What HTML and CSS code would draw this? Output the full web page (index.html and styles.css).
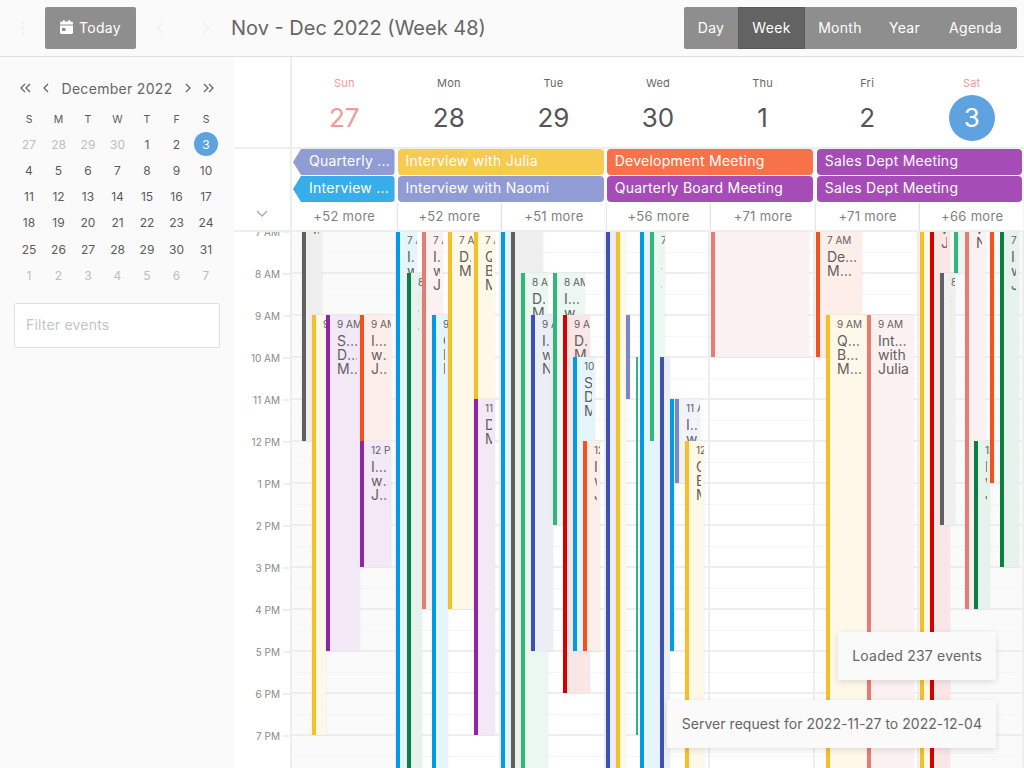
FILE: index.html
```html
<!DOCTYPE html>
<html>
<head>
    <meta charset="UTF-8">
    <meta name="viewport" content="width=device-width, initial-scale=1.0">
    <title>Calendar</title>
    <link rel="stylesheet" href="styles.css">
</head>
<body>
    <header class="topbar">
        <button class="icon-btn menu-btn" aria-label="Menu">
            <svg width="4" height="14" viewBox="0 0 4 14"><circle cx="2" cy="2" r="1.5"/><circle cx="2" cy="7" r="1.5"/><circle cx="2" cy="12" r="1.5"/></svg>
        </button>
        <button class="btn today-btn">
            <svg width="13" height="14" viewBox="0 0 13 14"><path d="M3 0h1.600v1.600h3.800V0H10v1.600h1.500c.8 0 1.500.7 1.500 1.500v1.500H0V3.100C0 2.300.7 1.600 1.500 1.600H3zM0 5.600h13v7c0 .8-.7 1.400-1.500 1.400h-10C.7 14 0 13.400 0 12.600zM2 8v3h3.500V8z" fill-rule="evenodd"/></svg>
            Today
        </button>
        <button class="icon-btn prev-btn" aria-label="Previous">
            <svg width="9" height="14" viewBox="0 0 9 14"><path d="M7.500 1 1.500 7l6 6" fill="none" stroke="currentColor" stroke-width="1.600"/></svg>
        </button>
        <button class="icon-btn next-btn" aria-label="Next">
            <svg width="9" height="14" viewBox="0 0 9 14"><path d="M1.500 1l6 6-6 6" fill="none" stroke="currentColor" stroke-width="1.600"/></svg>
        </button>
        <h1 class="range-title">Nov - Dec 2022 (Week 48)</h1>
        <div class="view-group">
            <button class="view-btn view-day">Day</button>
            <button class="view-btn view-week active">Week</button>
            <button class="view-btn view-month">Month</button>
            <button class="view-btn view-year">Year</button>
            <button class="view-btn view-agenda">Agenda</button>
        </div>
    </header>

    <div class="main">
        <aside class="sidebar">
            <div class="month-nav">
                <svg width="11" height="10" viewBox="0 0 11 10"><path d="M5 1 1 5l4 4M10 1 6 5l4 4"/></svg>
                <svg class="nav-single" width="7" height="10" viewBox="0 0 7 10"><path d="M6 1 2 5l4 4"/></svg>
                <span class="month-name">December 2022</span>
                <svg class="nav-single" width="7" height="10" viewBox="0 0 7 10"><path d="M1 1l4 4-4 4"/></svg>
                <svg width="11" height="10" viewBox="0 0 11 10"><path d="M1 1l4 4-4 4M6 1l4 4-4 4"/></svg>
            </div>
            <div class="mini-cal" id="mini-cal"></div>
            <input class="filter-input" type="text" placeholder="Filter events">
        </aside>

        <section class="calendar">
            <div class="day-heads">
                <div class="axis-cell"></div>
                <div class="day-head weekend"><span class="day-name">Sun</span><span class="day-num">27</span></div>
                <div class="day-head"><span class="day-name">Mon</span><span class="day-num">28</span></div>
                <div class="day-head"><span class="day-name">Tue</span><span class="day-num">29</span></div>
                <div class="day-head"><span class="day-name">Wed</span><span class="day-num">30</span></div>
                <div class="day-head"><span class="day-name">Thu</span><span class="day-num">1</span></div>
                <div class="day-head"><span class="day-name">Fri</span><span class="day-num">2</span></div>
                <div class="day-head weekend"><span class="day-name">Sat</span><span class="day-num today">3</span></div>
            </div>

            <div class="allday">
                <div class="axis-cell allday-axis">
                    <svg width="12" height="7" viewBox="0 0 12 7"><path d="M1 1l5 5 5-5" fill="none" stroke="#aaa" stroke-width="1.300"/></svg>
                </div>
                <div class="allday-bars">
                    <div class="bar bar-peri bar-cont">Quarterly ...</div>
                    <div class="bar bar-yellow span-2">Interview with Julia</div>
                    <div class="bar bar-orange span-2">Development Meeting</div>
                    <div class="bar bar-purple span-2 bar-last">Sales Dept Meeting</div>
                    <div class="bar bar-blue bar-cont">Interview ...</div>
                    <div class="bar bar-peri span-2">Interview with Naomi</div>
                    <div class="bar bar-purple span-2">Quarterly Board Meeting</div>
                    <div class="bar bar-purple span-2 bar-last">Sales Dept Meeting</div>
                </div>
                <div class="more-row">
                    <span>+52 more</span><span>+52 more</span><span>+51 more</span><span>+56 more</span><span>+71 more</span><span>+71 more</span><span>+66 more</span>
                </div>
            </div>

            <div class="grid-wrap">
                <div class="time-axis" id="time-axis"></div>
                <div class="canvas" id="canvas">
                    <div class="day-col weekend"></div>
                    <div class="day-col"></div>
                    <div class="day-col"></div>
                    <div class="day-col"></div>
                    <div class="day-col"></div>
                    <div class="day-col"></div>
                    <div class="day-col weekend"></div>
                </div>
            </div>
        </section>
    </div>

    <div class="toasts">
        <div class="toast toast-loaded">Loaded 237 events</div>
        <div class="toast toast-server">Server request for 2022-11-27 to 2022-12-04</div>
    </div>

    <script src="script.js"></script>
</body>
</html>
```

FILE: styles.css
```css
* {
    box-sizing: border-box;
}
html, body {
    height: 100%;
}
body {
    display: flex;
    flex-direction: column;
    margin: 0;
    overflow: hidden;
    background-color: #fff;
    color: #616161;
    font-family: Inter, "Noto Sans", sans-serif;
}
button {
    font-family: inherit;
    border: none;
    background: none;
    padding: 0;
}

/* top toolbar */
.topbar {
    display: flex;
    align-items: center;
    flex: none;
    height: 57px;
    padding: 0 7px 1px 0;
    background-color: #fafafa;
    border-bottom: 1px solid #e0e0e0;
}
.icon-btn {
    display: flex;
    align-items: center;
    justify-content: center;
    color: #f2f2f2;
    fill: #f0f0f0;
}
.menu-btn {
    width: 45px;
}
.prev-btn {
    width: 45px;
    margin-left: 2px;
}
.next-btn {
    width: 45px;
}
.btn {
    display: flex;
    align-items: center;
    justify-content: center;
    gap: 6px;
    width: 91px;
    height: 42px;
    background-color: #8e8e8e;
    color: #fff;
    font-size: 14px;
    letter-spacing: 0.3px;
    border-radius: 2px;
}
.today-btn svg {
    fill: #fff;
    margin-bottom: 1px;
}
.range-title {
    flex: 1;
    margin: 0 0 0 3px;
    color: #666;
    font-size: 20px;
    font-weight: 400;
}
.view-group {
    display: flex;
    height: 42px;
    border-radius: 2px;
    overflow: hidden;
    background-color: #8e8e8e;
}
.view-btn {
    color: #fff;
    font-size: 14px;
    letter-spacing: 0.3px;
}
.view-day {
    width: 54px;
}
.view-week {
    width: 67px;
}
.view-month {
    width: 70px;
}
.view-year {
    width: 59px;
}
.view-agenda {
    width: 83px;
}
.view-btn.active {
    background-color: #636363;
    box-shadow: inset 0 0 0 1px #5a5a5a;
}

/* main area */
.main {
    display: flex;
    flex: 1;
    min-height: 0;
}
.sidebar {
    flex: none;
    width: 234px;
    padding: 21px 14px 0;
    background-color: #fafafa;
}
.month-nav {
    display: flex;
    align-items: center;
    justify-content: space-between;
    padding: 0 6px;
    height: 20px;
    color: #666;
    font-size: 14px;
}
.month-nav svg {
    fill: none;
    stroke: #666;
    stroke-width: 1.300;
}
.month-name {
    margin: 0 1px;
    letter-spacing: 0.3px;
}
.mini-cal {
    display: grid;
    grid-template-columns: repeat(7, 29.500px);
    grid-auto-rows: 26.200px;
    justify-content: center;
    margin-top: 7px;
    margin-left: 1px;
    font-size: 12px;
}
.mini-cal span {
    display: flex;
    align-items: center;
    justify-content: center;
    color: #5a5a5a;
}
.mini-cal .mini-head {
    padding-top: 2px;
    font-size: 10.500px;
}
.mini-cal .other {
    color: #bdbdbd;
}
.mini-cal .selected::before {
    content: "";
    position: absolute;
    width: 24px;
    height: 24px;
    border-radius: 50%;
    background-color: #5ea3e0;
}
.mini-cal .selected {
    position: relative;
    color: #fff;
}
.mini-cal .selected b {
    position: relative;
    font-weight: 400;
}
.filter-input {
    display: block;
    width: 206px;
    height: 45px;
    margin-top: 15px;
    padding: 0 11px 2px;
    border: 1px solid #e0e0e0;
    border-radius: 2px;
    background-color: #fff;
    font-family: inherit;
    font-size: 14px;
    letter-spacing: 0.2px;
}
.filter-input::placeholder {
    color: #c4c4c4;
}

/* calendar */
.calendar {
    display: flex;
    flex: 1;
    flex-direction: column;
    min-width: 0;
}
.day-heads {
    display: grid;
    grid-template-columns: 58px repeat(7, 1fr);
    flex: none;
    height: 92px;
    border-bottom: 2px solid #eee;
}
.axis-cell {
    border-right: 2px solid #eee;
}
.day-head {
    display: flex;
    flex-direction: column;
    align-items: center;
    padding-top: 19px;
}
.day-name {
    height: 14px;
    color: #666;
    font-size: 11px;
    letter-spacing: 0.2px;
    line-height: 14px;
}
.weekend .day-name {
    color: #ef9a9a;
}
.day-num {
    display: flex;
    align-items: center;
    justify-content: center;
    width: 46px;
    height: 46px;
    margin-top: 5px;
    padding-bottom: 1px;
    border-radius: 50%;
    color: #555;
    font-size: 26px;
}
.weekend .day-num {
    color: #ef9a9a;
}
.weekend .day-num.today {
    background-color: #5ea3e0;
    color: #fff;
}

/* all day rows */
.allday {
    position: relative;
    flex: none;
    height: 83px;
    padding-left: 58px;
    border-bottom: 2px solid #eee;
}
.allday::after {
    content: "";
    position: absolute;
    top: 0;
    bottom: 0;
    left: 58px;
    right: 0;
    pointer-events: none;
    background-image: linear-gradient(to right, #0000000a 1px, transparent 1px);
    background-size: calc(100% / 7) 100%;
    background-position: -1px 0;
}
.allday-axis {
    position: absolute;
    top: 0;
    bottom: 0;
    left: 0;
    width: 58px;
    display: flex;
    align-items: flex-end;
    justify-content: center;
    padding: 0 0 13px 0;
}
.allday-bars {
    display: grid;
    grid-template-columns: repeat(7, 1fr);
    grid-template-rows: 26px 26px;
    gap: 1px 0;
}
.bar {
    margin: 0 2px 0 1px;
    padding: 0 8px;
    border-radius: 4px;
    color: #fff;
    font-size: 14px;
    letter-spacing: 0.25px;
    line-height: 24px;
    white-space: nowrap;
    overflow: hidden;
}
.span-2 {
    grid-column: span 2;
}
.bar-last {
    margin-left: 2px;
}
.bar-cont {
    padding-left: 16px;
    clip-path: polygon(0 50%, 8px 0, 100% 0, 100% 100%, 8px 100%);
}
.bar-peri {
    background-color: #919cd5;
}
.bar-blue {
    background-color: #37aeea;
}
.bar-yellow {
    background-color: #f7ca50;
}
.bar-orange {
    background-color: #f77248;
}
.bar-purple {
    background-color: #a64cb7;
}
.more-row {
    display: grid;
    grid-template-columns: repeat(7, 1fr);
    height: 28px;
    margin-top: 1px;
    text-align: center;
    color: #808080;
    font-size: 13px;
    letter-spacing: 0.3px;
    line-height: 26px;
}
.more-row span {
    border-left: 1px solid #e6e6e6;
}
.more-row span:first-child {
    border-left: none;
}

/* time grid */
.grid-wrap {
    display: flex;
    flex: 1;
    min-height: 0;
    overflow: hidden;
}
.time-axis {
    flex: none;
    width: 58px;
    border-right: 2px solid #eee;
}
.axis-hour {
    position: relative;
    height: 42px;
    top: -1px;
    color: #8a8a8a;
    font-size: 10px;
    line-height: 14px;
    text-align: right;
    padding-right: 10px;
}
.axis-hour span {
    position: relative;
    top: -6px;
}
.axis-hour::after {
    content: "";
    position: absolute;
    top: 0;
    right: 0;
    width: 7px;
    height: 2px;
    background-color: #eee;
}
.canvas {
    position: relative;
    display: flex;
    flex: 1;
    overflow: hidden;
}
.day-col {
    flex: 1;
    border-right: 2px solid #eee;
    background-image:
        linear-gradient(to bottom, #eee 2px, transparent 2px),
        linear-gradient(to bottom, #f5f5f5 1px, transparent 1px);
    background-size: 100% 42px;
    background-position: 0 -2px, 0 20px;
}
.day-col:last-of-type {
    border-right: none;
}
.day-col.weekend {
    background-color: #fafafa;
}
.event {
    position: absolute;
    padding: 3px 0 0 7px;
    border-left: 4px solid;
    box-shadow: 0 0 2px rgba(0, 0, 0, 0.08);
    overflow: hidden;
    color: #616161;
}
.event-bare {
    padding: 0;
}
.event-thin {
    border-left-width: 2px;
    box-shadow: none;
}
.event-time {
    height: 12px;
    margin-bottom: 4px;
    font-size: 10px;
    line-height: 12px;
    white-space: nowrap;
    overflow: hidden;
}
.event-line {
    margin-right: 3px;
    font-size: 14px;
    line-height: 14px;
    white-space: nowrap;
    overflow: hidden;
    text-overflow: ellipsis;
}
.c-blue { border-color: #039be5; background-color: #e5f5fc; }
.c-dgreen { border-color: #0b8043; background-color: #e6f2ec; }
.c-green { border-color: #33b679; background-color: #ebf7f1; }
.c-salmon { border-color: #e67c73; background-color: #fcf1f1; }
.c-yellow { border-color: #f6bf26; background-color: #fef8e9; }
.c-purple { border-color: #8e24aa; background-color: #f3e9f6; }
.c-orange { border-color: #f4511e; background-color: #feeee9; }
.c-gray { border-color: #616161; background-color: #efefef; }
.c-indigo { border-color: #3f51b5; background-color: #ebedf7; }
.c-peri { border-color: #7986cb; background-color: #f1f3fa; }
.c-red { border-color: #d50000; background-color: #fae6e6; }

/* toasts */
.toasts {
    position: absolute;
    right: 28px;
    bottom: 20px;
    display: flex;
    flex-direction: column;
    align-items: flex-end;
    gap: 20px;
}
.toast {
    height: 48px;
    padding: 0 14px;
    border-radius: 2px;
    background-color: #fafafa;
    box-shadow: 0 2px 6px rgba(0, 0, 0, 0.12);
    color: #666;
    font-size: 14px;
    line-height: 47px;
}
.toast-loaded {
    letter-spacing: 0.2px;
}
.toast-server {
    letter-spacing: 0.03px;
    padding-left: 15px;
}
```

FILE: script.js
```js
// mini month
const miniCal = document.getElementById('mini-cal');
let miniHtml = '';
['S', 'M', 'T', 'W', 'T', 'F', 'S'].forEach(d => {
    miniHtml += `<span class="mini-head">${d}</span>`;
});
[27, 28, 29, 30].forEach(d => {
    miniHtml += `<span class="other">${d}</span>`;
});
for (let d = 1; d <= 31; d++) {
    miniHtml += d === 3 ? `<span class="selected"><b>${d}</b></span>` : `<span>${d}</span>`;
}
for (let d = 1; d <= 7; d++) {
    miniHtml += `<span class="other">${d}</span>`;
}
miniCal.innerHTML = miniHtml;

// hour labels
const hours = ['7 AM', '8 AM', '9 AM', '10 AM', '11 AM', '12 PM', '1 PM', '2 PM', '3 PM', '4 PM', '5 PM', '6 PM', '7 PM', '8 PM'];
document.getElementById('time-axis').innerHTML = hours
    .map(h => `<div class="axis-hour"><span>${h}</span></div>`)
    .join('');

// events: [x, right, start hour, end hour, colour, time label, lines]
const IW = ['Interview', 'with', 'Julia'];
const IN = ['Interview', 'with', 'Naomi'];
const SD = ['Sales', 'Dept', 'Meeting'];
const DM = ['Development', 'Meeting'];
const QB = ['Quarterly', 'Board', 'Meeting'];
const events = [
    // Sun
    [302, 322, 6, 12, 'gray', '6 AM', DM],
    [312, 326, 9, 19, 'yellow', '9 AM', QB],
    [326, 360, 9, 17, 'purple', '9 AM', SD],
    [360, 391, 9, 12, 'orange', '9 AM', IW],
    [360, 391, 12, 15, 'purple', '12 PM', IW],
    // Mon
    [396, 417, 7, 24, 'blue', '7 AM', IN],
    [407, 422, 8, 24, 'dgreen', '8 AM', IW],
    [422, 443, 7, 16, 'salmon', '7 AM', IW],
    [432, 448, 9, 24, 'blue', '9 AM', QB],
    [448, 474, 7, 16, 'yellow', '7 AM', DM],
    [474, 495, 7, 11, 'yellow', '7 AM', QB],
    [474, 495, 11, 19, 'purple', '11 AM', DM],
    // Tue
    [501, 511, 5, 24, 'blue', '', []],
    [511, 543, 5, 24, 'gray', '', []],
    [521, 548, 8, 24, 'green', '8 AM', DM],
    [531, 553, 9, 17, 'indigo', '9 AM', IN],
    [553, 585, 8, 14, 'green', '8 AM', IW],
    [563, 590, 9, 18, 'red', '9 AM', DM],
    [573, 595, 10, 17, 'blue', '10 AM', SD],
    [583, 600, 12, 17, 'orange', '12 PM', IW],
    // Wed
    [606, 616, 5, 24, 'indigo', '', []],
    [616, 626, 5, 24, 'yellow', '', []],
    [626, 630, 9, 11, 'peri', '', []],
    [636, 638, 10, 19, 'green', '', []],
    [640, 660, 5, 24, 'blue', '', []],
    [650, 665, 7, 12, 'green', '7 AM', IW],
    [660, 670, 10, 24, 'indigo', '', []],
    [670, 675, 11, 17, 'blue', '', []],
    [675, 700, 11, 13, 'peri', '11 AM', IW],
    [685, 704, 12, 24, 'yellow', '12 PM', QB],
    // Thu
    [711, 809, 5, 10, 'salmon', '', []],
    // Fri
    [816, 862, 7, 10, 'orange', '7 AM', DM],
    [826, 867, 9, 24, 'yellow', '9 AM', QB],
    [867, 914, 9, 24, 'salmon', '9 AM', IW],
    // Sat
    [920, 930, 5, 24, 'yellow', '', []],
    [930, 950, 6, 24, 'red', '6 AM', IW],
    [954, 964, 5, 8, 'green', '', []],
    [940, 955, 8, 14, 'gray', '8 AM', SD],
    [965, 985, 6, 16, 'salmon', '6 AM', IN],
    [974, 990, 12, 16, 'dgreen', '12 PM', IW],
    [990, 994, 5, 13, 'orange', '', []],
    [1000, 1019, 7, 15, 'dgreen', '7 AM', IW]
];

const canvas = document.getElementById('canvas');
events.forEach(ev => {
    const [x, right, start, end, colour, time, lines] = ev;
    const el = document.createElement('div');
    el.className = `event c-${colour}`;
    if (!time) {
        el.classList.add('event-bare');
    }
    if (right - x < 4) {
        el.classList.add('event-thin');
    }
    el.style.left = `${x - 292}px`;
    el.style.width = `${right - x}px`;
    el.style.top = `${(start - 7) * 42 - 1}px`;
    el.style.height = `${(end - start) * 42}px`;
    let html = time ? `<div class="event-time">${time}</div>` : '';
    lines.forEach(line => {
        html += `<div class="event-line">${line}</div>`;
    });
    el.innerHTML = html;
    canvas.appendChild(el);
});
```
